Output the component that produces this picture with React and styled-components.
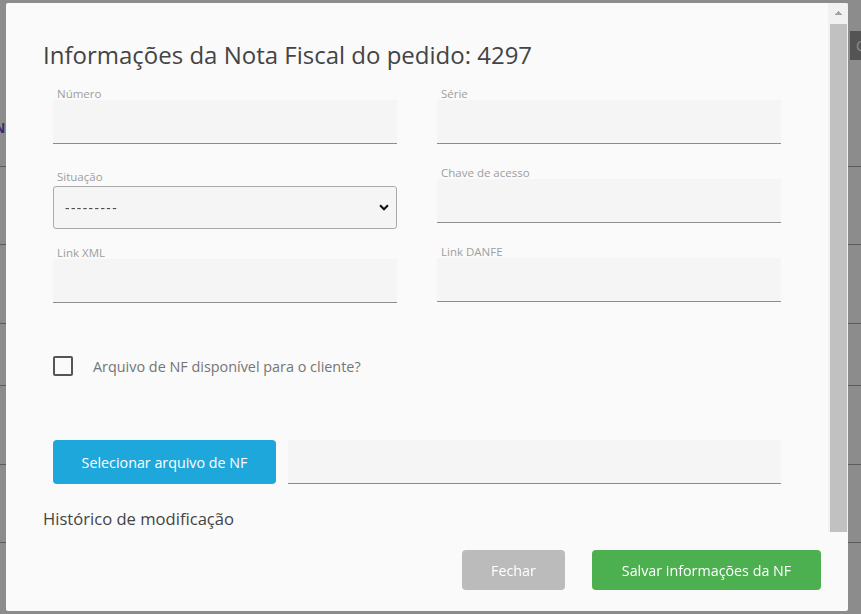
import React from 'react';
import styled, { createGlobalStyle } from 'styled-components';

const GlobalStyle = createGlobalStyle`
  html, body {
    margin: 0;
    padding: 0;
    height: 100%;
    overflow: hidden;
  }
  body {
    font-family: "Open Sans", Lato, sans-serif;
    background: #cbcbcb;
  }
`;

// linhas da tela de pedidos que fica atrás do modal
const bgRows = [
  { h: 78, text: 'Nº', pt: 28 },
  { h: 77 },
  { h: 78 },
  { h: 61 },
  { h: 78 },
  { h: 77 },
  { h: 80 },
];

const App = () => {
  return (
    <>
      <GlobalStyle />
      <Page>
        <PageHeader>
          <HeaderButton>Cadastrar</HeaderButton>
        </PageHeader>
        {bgRows.map((r, i) => (
          <PageRow key={i} style={{ height: r.h, paddingTop: r.pt || 0 }}>
            {r.text}
          </PageRow>
        ))}
      </Page>
      <Backdrop>
        <Modal>
          <ModalBody>
            <Content>
              <Title>Informações da Nota Fiscal do pedido: 4297</Title>
              <FieldGrid>
                <Column>
                  <Field>
                    <Label>Número</Label>
                    <TextInput />
                  </Field>
                  <Field $mt={26}>
                    <Label $mb={3}>Situação</Label>
                    <SelectWrap>
                      <Select defaultValue="">
                        <option value="">---------</option>
                        <option value="emitida">Emitida</option>
                        <option value="cancelada">Cancelada</option>
                      </Select>
                      <Chevron viewBox="0 0 12 8">
                        <path d="M1.5 1.5 L6 6 L10.5 1.5" fill="none" stroke="#111" strokeWidth="2.4" />
                      </Chevron>
                    </SelectWrap>
                  </Field>
                  <Field $mt={17}>
                    <Label>Link XML</Label>
                    <TextInput />
                  </Field>
                </Column>
                <Column>
                  <Field>
                    <Label>Série</Label>
                    <TextInput />
                  </Field>
                  <Field $mt={22}>
                    <Label>Chave de acesso</Label>
                    <TextInput />
                  </Field>
                  <Field $mt={22}>
                    <Label>Link DANFE</Label>
                    <TextInput />
                  </Field>
                </Column>
              </FieldGrid>

              <CheckRow>
                <Checkbox type="checkbox" />
                <CheckLabel>Arquivo de NF disponível para o cliente?</CheckLabel>
              </CheckRow>

              <UploadRow>
                <UploadButton type="button">Selecionar arquivo de NF</UploadButton>
                <TextInput />
              </UploadRow>

              <SectionTitle>Histórico de modificação</SectionTitle>
            </Content>
            <ScrollBar>
              <ScrollArrow />
              <ScrollThumb />
            </ScrollBar>
          </ModalBody>
          <Footer>
            <Button $variant="close">Fechar</Button>
            <Button $variant="save">Salvar informações da NF</Button>
          </Footer>
        </Modal>
      </Backdrop>
    </>
  );
};

const Page = styled.div`
  width: 100%;
  height: 614px;
  background: #fff;
  display: flex;
  flex-direction: column;
`;

const PageHeader = styled.div`
  display: flex;
  justify-content: flex-end;
  padding-top: 31px;
`;

const HeaderButton = styled.div`
  width: 80px;
  height: 29px;
  margin-right: -69px;
  background: #9a9a9a;
  color: #fff;
  font-size: 14px;
  line-height: 29px;
  padding-left: 6px;
  box-sizing: border-box;
`;

const PageRow = styled.div`
  flex: none;
  box-sizing: content-box;
  border-bottom: 1px solid #a6a6a6;
  display: flex;
  align-items: center;
  color: #6a4fd8;
  font-size: 14px;
  font-weight: 700;
  margin-left: -6px;
`;

const Backdrop = styled.div`
  position: fixed;
  inset: 0;
  background: rgba(0, 0, 0, 0.45);
`;

const Modal = styled.div`
  position: absolute;
  left: 6px;
  top: 3px;
  width: 842px;
  height: 608px;
  background: #fafafa;
  border-radius: 2px;
  display: flex;
  flex-direction: column;
  overflow: hidden;
`;

const ModalBody = styled.div`
  height: 529px;
  flex: none;
  display: flex;
`;

const Content = styled.div`
  flex: 1;
  overflow: hidden;
  padding: 37px 0 0 37px;
`;

const ScrollBar = styled.div`
  width: 20px;
  flex: none;
  display: flex;
  flex-direction: column;
  background: #f1f1f1;
`;

const ScrollArrow = styled.div`
  height: 21px;
  flex: none;
  background-image:
    linear-gradient(to top left, #a3a3a3 50%, transparent 50%),
    linear-gradient(to top right, #a3a3a3 50%, transparent 50%);
  background-size: 4px 4px, 4px 4px;
  background-repeat: no-repeat;
  background-position: 7px 8px, 11px 8px;
`;

const ScrollThumb = styled.div`
  flex: 1;
  margin: 0 1px 0 2px;
  background: #c1c1c1;
`;

const Title = styled.h2`
  margin: 0;
  font-size: 24px;
  line-height: 29px;
  font-weight: 400;
  color: #444;
`;

const FieldGrid = styled.div`
  display: grid;
  grid-template-columns: 344px 344px;
  column-gap: 40px;
  margin: 18px 0 0 10px;
`;

const Column = styled.div`
  display: flex;
  flex-direction: column;
`;

const Field = styled.div`
  display: flex;
  flex-direction: column;
  margin-top: ${(p) => p.$mt || 0}px;
`;

const Label = styled.label`
  font-size: 11.5px;
  line-height: 13px;
  color: #9e9e9e;
  padding-left: 4px;
  margin-bottom: ${(p) => p.$mb || 0}px;
`;

const TextInput = styled.input`
  box-sizing: border-box;
  height: 44px;
  width: 100%;
  border: none;
  border-bottom: 1px solid #8c8c8c;
  background: #f5f5f5;
  outline: none;
  font-family: inherit;
  font-size: 14px;
  padding: 0 12px;
`;

const SelectWrap = styled.div`
  position: relative;
`;

const Select = styled.select`
  appearance: none;
  box-sizing: border-box;
  display: block;
  height: 43px;
  width: 100%;
  border: 1px solid #a9a9a9;
  border-radius: 3px;
  background: #f5f5f5;
  font-family: inherit;
  font-size: 14px;
  letter-spacing: 1.4px;
  color: #444;
  padding: 0 11px;
  outline: none;
`;

const Chevron = styled.svg`
  position: absolute;
  right: 7px;
  top: 18px;
  width: 12px;
  height: 7px;
  pointer-events: none;
`;

const CheckRow = styled.div`
  display: flex;
  align-items: center;
  gap: 20px;
  margin: 53px 0 0 10px;
`;

const Checkbox = styled.input`
  appearance: none;
  margin: 0;
  width: 20px;
  height: 20px;
  border: 2px solid #555;
  border-radius: 2px;
  box-sizing: border-box;
  background: transparent;
`;

const CheckLabel = styled.span`
  font-size: 14.4px;
  color: #757575;
`;

const UploadRow = styled.div`
  display: grid;
  grid-template-columns: 223px 493px;
  column-gap: 12px;
  margin: 64px 0 0 10px;
`;

const UploadButton = styled.button`
  height: 44px;
  border: none;
  border-radius: 4px;
  background: #1ea7db;
  color: #fff;
  font-family: inherit;
  font-size: 14.3px;
  font-weight: 500;
  cursor: pointer;
`;

const SectionTitle = styled.h3`
  margin: 25px 0 0;
  font-size: 16.6px;
  line-height: 20px;
  font-weight: 400;
  color: #444;
`;

const Footer = styled.div`
  flex: 1;
  display: flex;
  justify-content: flex-end;
  align-items: flex-start;
  gap: 27px;
  padding: 18px 27px 0 0;
`;

const Button = styled.button`
  height: 40px;
  border: none;
  border-radius: 4px;
  color: #fff;
  font-family: inherit;
  font-size: 14.3px;
  font-weight: 500;
  cursor: pointer;
  width: ${(p) => (p.$variant === 'save' ? '229px' : '103px')};
  background: ${(p) => (p.$variant === 'save' ? '#4caf50' : '#bbbbbb')};
`;

export default App;
